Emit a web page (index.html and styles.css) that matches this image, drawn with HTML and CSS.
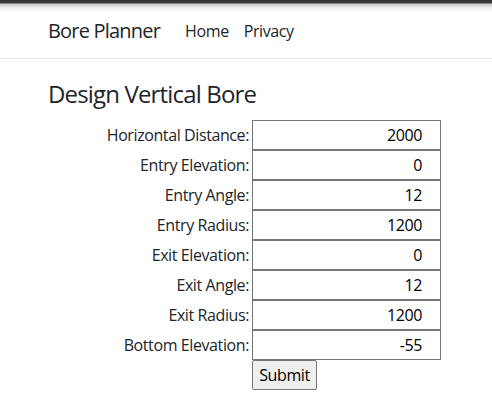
FILE: index.html
```html
<!DOCTYPE html>
<html lang="en">
<head>
<meta charset="utf-8">
<title>Bore Planner</title>
<link rel="stylesheet" href="styles.css">
</head>
<body>
<header class="navbar">
  <a class="brand" href="#">Bore Planner</a>
  <nav class="nav">
    <a class="nav-link" href="#">Home</a>
    <a class="nav-link" href="#">Privacy</a>
  </nav>
</header>
<main class="container">
  <h1 class="title">Design Vertical Bore</h1>
  <form class="bore-form">
    <table class="form-table">
      <tr><td class="label">Horizontal Distance:</td><td class="field"><input class="num" type="text" value="2000"></td></tr>
      <tr><td class="label">Entry Elevation:</td><td class="field"><input class="num" type="text" value="0"></td></tr>
      <tr><td class="label">Entry Angle:</td><td class="field"><input class="num" type="text" value="12"></td></tr>
      <tr><td class="label">Entry Radius:</td><td class="field"><input class="num" type="text" value="1200"></td></tr>
      <tr><td class="label">Exit Elevation:</td><td class="field"><input class="num" type="text" value="0"></td></tr>
      <tr><td class="label">Exit Angle:</td><td class="field"><input class="num" type="text" value="12"></td></tr>
      <tr><td class="label">Exit Radius:</td><td class="field"><input class="num" type="text" value="1200"></td></tr>
      <tr><td class="label">Bottom Elevation:</td><td class="field"><input class="num" type="text" value="-55"></td></tr>
      <tr><td class="label"></td><td class="field"><button class="submit" type="button">Submit</button></td></tr>
    </table>
  </form>
</main>
</body>
</html>
```

FILE: styles.css
```css
* { box-sizing: border-box; }
html, body {
  margin: 0;
  padding: 0;
  background: #fff;
  color: #212529;
  font-family: "Open Sans", "Noto Sans", sans-serif;
  font-size: 16px;
  line-height: 1.5;
  letter-spacing: -0.025em;
}
.navbar {
  height: 59px;
  display: flex;
  align-items: center;
  padding: 3px 48px 0 48px;
  border-bottom: 1px solid #e2e2e2;
  background: linear-gradient(to bottom, #353535 0, #3a3a3a 3px, #c8c8c8 4px, #f2f2f2 8px, #fff 13px);
}
.brand {
  font-size: 20px;
  letter-spacing: -0.04em;
  color: #212529;
  text-decoration: none;
  margin-right: 25px;
  line-height: 30px;
}
.nav {
  display: flex;
  gap: 15px;
}
.nav-link {
  color: #212529;
  text-decoration: none;
  line-height: 24px;
}
.container {
  padding: 0 48px;
}
.title {
  font-size: 24px;
  font-weight: 400;
  line-height: 1.2;
  letter-spacing: -0.035em;
  margin: 21px 0 11px 0;
}
.bore-form { margin: 0; }
.form-table {
  width: 100%;
  border-collapse: separate;
  border-spacing: 0;
}
.form-table td { padding: 0; }
.label {
  text-align: right;
  padding-right: 3px !important;
  white-space: nowrap;
  vertical-align: middle;
}
.field {
  width: 192px;
  vertical-align: top;
}
.num {
  display: block;
  width: 189px;
  height: 30px;
  margin: 0;
  padding: 2px 18px 2px 2px;
  border: 1px solid #767676;
  border-radius: 0;
  font-family: inherit;
  font-size: 16px;
  letter-spacing: -0.025em;
  line-height: 24px;
  color: #000;
  text-align: right;
  background: #fff;
}
.submit {
  display: block;
  width: 65px;
  height: 30px;
  margin: 0;
  padding: 1px 4px;
  border: 1px solid #767676;
  border-radius: 2px;
  background: #efefef;
  font-family: inherit;
  font-size: 16px;
  letter-spacing: -0.025em;
  line-height: 24px;
  color: #000;
}
```
